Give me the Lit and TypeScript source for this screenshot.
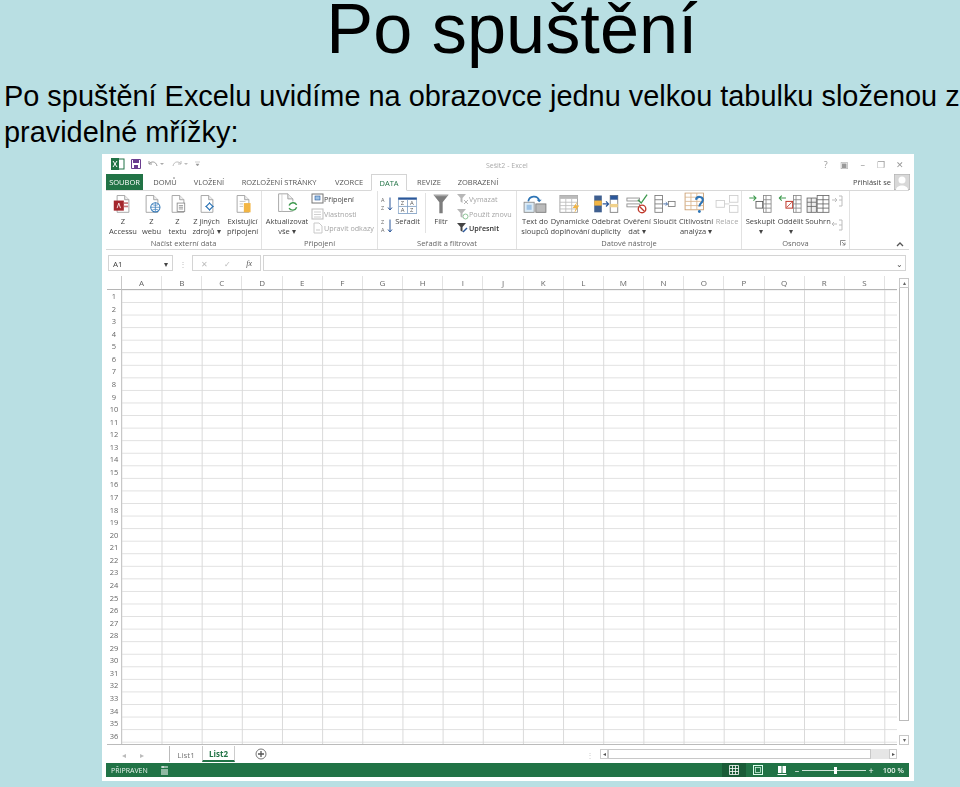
import { LitElement, html, css, svg } from "lit";
import { customElement } from "lit/decorators.js";

const doc = (extra: unknown) => html`<svg width="26" height="24" viewBox="0 0 26 24"><path d="M6 2h9l5 5v15H6z" fill="#fff" stroke="#9a9a9a"/><path d="M15 2v5h5" fill="#eee" stroke="#9a9a9a"/>${extra}</svg>`;
const azIcon = (a: string, b: string) => html`<svg width="13" height="14" viewBox="0 0 13 14"><path d="M10 .5v12M8 10.500l2 2.500 2-2.500" fill="none" stroke="#2b579a"/><text x="1" y="5" class="tiny">${a}</text><text x="1" y="13" class="tiny">${b}</text></svg>`;

const icons: Record<string, unknown> = {
  access: doc(svg`<rect x="2" y="8" width="12" height="12" fill="#a4262c"/><rect x="14" y="10" width="5" height="2" fill="#c9797d"/><rect x="14" y="14" width="5" height="2" fill="#c9797d"/><path d="M6 17l2-6 2 6" fill="none" stroke="#fff"/>`),
  web: doc(svg`<circle cx="17" cy="16" r="5.5" fill="#fff" stroke="#2e75b6" stroke-width="1.2"/><path d="M11.5 16h11M17 10.5v11M13 12.5c3 1.5 5 1.5 8 0M13 19.5c3-1.5 5-1.5 8 0" fill="none" stroke="#2e75b6" stroke-width=".8"/>`),
  text: doc(svg`<rect x="12" y="11" width="9" height="10" fill="#fff" stroke="#8a8a8a"/><path d="M14 14h5M14 16h5M14 18h5" stroke="#8a8a8a"/>`),
  other: doc(svg`<path d="M16 10v10M11 15h10" stroke="#2e75b6"/><path d="M16 11l4 4-4 4-4-4z" fill="#fff" stroke="#2e75b6" stroke-width="1.4"/>`),
  exist: doc(svg`<rect x="14" y="11" width="8" height="11" fill="#f2b544"/><path d="M9 9h7M9 12h4M9 15h4" stroke="#bbb"/>`),
  refresh: html`<svg width="32" height="26" viewBox="0 0 32 26"><path d="M6 2h11l6 6v15H6z" fill="#fff" stroke="#9a9a9a"/><path d="M17 2v6h6" fill="#eee" stroke="#9a9a9a"/><path d="M10 2v21" stroke="#ccc"/><circle cx="23" cy="17" r="6" fill="#fff"/><path d="M18.500 16a5 5 0 0 1 9-1M27.500 18a5 5 0 0 1-9 1" fill="none" stroke="#3f9a4f" stroke-width="1.700"/></svg>`,
  sortbox: html`<svg width="23" height="20" viewBox="0 0 23 20"><rect x=".5" y=".5" width="22" height="19" fill="#fff" stroke="#7f9fc4"/><rect x=".5" y=".5" width="22" height="2.500" fill="#2b579a"/><path d="M11.500 3v16M1 11h21" stroke="#7f9fc4"/><text x="3.500" y="9.500" class="cell">Z</text><text x="14.500" y="9.500" class="cell">A</text><text x="3.500" y="18" class="cell">A</text><text x="14.500" y="18" class="cell">Z</text></svg>`,
  funnel: html`<svg width="20" height="24" viewBox="0 0 20 24"><path d="M1 1h18l-7 9v13H8V10z" fill="#7d7d7d"/><path d="M1 1h18l-2 2H3z" fill="#a9a9a9"/></svg>`,
  ttc: html`<svg width="30" height="24" viewBox="0 0 30 24"><rect x="2" y="10" width="12" height="12" fill="#dcebf6" stroke="#888"/><rect x="5" y="13" width="6" height="6" fill="#9dc3e6"/><rect x="16" y="12" width="12" height="10" fill="#bbb" stroke="#777"/><path d="M7 9C8 2 18 1 20 8" fill="none" stroke="#2e75b6" stroke-width="2"/><path d="M17 7l3 3 3-3" fill="#2e75b6"/></svg>`,
  flash: html`<svg width="30" height="24" viewBox="0 0 30 24"><rect x="3" y="2" width="21" height="20" fill="#fff" stroke="#999"/><rect x="3" y="2" width="21" height="4" fill="#bbb"/><path d="M3 10h21M3 14h21M3 18h21M10 6v16M17 6v16" stroke="#bbb"/><path d="M24 9l-6 8h4l-2 6 6-9h-4z" fill="#f2b544"/></svg>`,
  dedupe: html`<svg width="32" height="24" viewBox="0 0 32 24"><rect x="2" y="2" width="9" height="20" fill="#3f5f8f"/><rect x="2" y="8" width="9" height="6" fill="#f2b544"/><rect x="21" y="2" width="9" height="20" fill="#fff" stroke="#777"/><rect x="21" y="2" width="9" height="5" fill="#2b579a"/><rect x="21" y="12" width="9" height="4" fill="#f2d28a"/><path d="M12 12h7M16 9l3 3-3 3" fill="none" stroke="#2b579a" stroke-width="1.500"/></svg>`,
  valid: html`<svg width="28" height="24" viewBox="0 0 28 24"><rect x="2" y="5" width="15" height="3.500" fill="#fff" stroke="#888"/><rect x="2" y="12" width="15" height="3.500" fill="#fff" stroke="#888"/><path d="M15 7l4 4 7-10" fill="none" stroke="#3f9a4f" stroke-width="1.600"/><circle cx="20" cy="18" r="4.500" fill="#fff" stroke="#c0392b" stroke-width="1.600"/><path d="M17 15l6 6" stroke="#c0392b" stroke-width="1.600"/></svg>`,
  merge: html`<svg width="28" height="24" viewBox="0 0 28 24"><rect x="2" y="2" width="9" height="20" fill="#fff" stroke="#777"/><path d="M2 7h9M2 12h9M2 17h9" stroke="#777"/><path d="M12 12h5M15 10l2 2-2 2" fill="none" stroke="#2b579a"/><rect x="18" y="9" width="8" height="6" fill="#fff" stroke="#777"/></svg>`,
  whatif: html`<svg width="30" height="26" viewBox="0 0 30 26"><rect x="2" y="1" width="22" height="20" fill="#fff" stroke="#c89a6a"/><path d="M2 6h22M2 11h22M2 16h22M9 1v20M16 1v20" stroke="#d9b58f"/><path d="M15 9c1-5 9-4 8 1-.5 3-4 3-4 7" fill="none" stroke="#2e75b6" stroke-width="2.600"/><circle cx="19" cy="23" r="1.700" fill="#2e75b6"/></svg>`,
  rel: html`<svg width="30" height="24" viewBox="0 0 30 24" opacity=".5"><rect x="2" y="8" width="10" height="8" fill="#fff" stroke="#999"/><rect x="18" y="2" width="10" height="8" fill="#fff" stroke="#999"/><rect x="18" y="14" width="10" height="8" fill="#fff" stroke="#999"/><path d="M12 12h6" stroke="#999"/></svg>`,
  group: html`<svg width="30" height="24" viewBox="0 0 30 24"><rect x="9" y="9" width="8" height="8" fill="#fff" stroke="#555"/><rect x="18" y="2" width="9" height="20" fill="#fff" stroke="#888"/><path d="M18 7h9M18 12h9M18 17h9M21 2v20" stroke="#888"/><path d="M1 5h8M6 2l3 3-3 3" fill="none" stroke="#3f9a4f" stroke-width="1.300"/></svg>`,
  ungroup: html`<svg width="30" height="24" viewBox="0 0 30 24"><rect x="9" y="9" width="8" height="8" fill="#fff" stroke="#c0392b" stroke-width="1.200"/><path d="M10 16l6-6" stroke="#c0392b"/><rect x="18" y="2" width="9" height="20" fill="#fff" stroke="#888"/><path d="M18 7h9M18 12h9M18 17h9M21 2v20" stroke="#888"/><path d="M9 5H1M4 2L1 5l3 3" fill="none" stroke="#3f9a4f" stroke-width="1.300"/></svg>`,
  subtotal: html`<svg width="30" height="24" viewBox="0 0 30 24"><rect x="2" y="5" width="11" height="17" fill="#eee" stroke="#666"/><rect x="14" y="2" width="14" height="20" fill="#fff" stroke="#666"/><path d="M2 10h11M2 15h11M7 5v17M14 7h14M14 12h14M14 17h14M21 2v20" stroke="#666"/></svg>`,
  smallOut: html`<svg width="12" height="44" viewBox="0 0 12 44" opacity=".55"><path d="M1 6h5M4 4l2 2-2 2M8 2h3v10H8M8 6h3" fill="none" stroke="#888"/><path d="M6 30H1M3 28l-2 2 2 2M8 26h3v10H8M8 31h3" fill="none" stroke="#888"/></svg>`,
  conn: html`<svg width="13" height="12" viewBox="0 0 13 12"><rect x="1" y="1" width="11" height="9" fill="#fff" stroke="#777"/><rect x="4" y="3" width="5" height="4" fill="#9dc3e6" stroke="#2b579a" stroke-width=".6"/></svg>`,
  props: html`<svg width="13" height="12" viewBox="0 0 13 12" opacity=".55"><rect x="1" y="1" width="11" height="10" fill="#fff" stroke="#888"/><path d="M3 4h7M3 6.500h7M3 9h7" stroke="#aaa"/></svg>`,
  links: html`<svg width="13" height="12" viewBox="0 0 13 12" opacity=".45"><path d="M3 1h5l3 3v7H3z" fill="#fff" stroke="#888"/><path d="M5 8h4" stroke="#888"/></svg>`,
  fClear: html`<svg width="13" height="12" viewBox="0 0 13 12" opacity=".6"><path d="M1 1h9L6.500 5v5L4.500 8.500V5z" fill="#888"/><path d="M8 7l4 4M12 7l-4 4" stroke="#888"/></svg>`,
  fAgain: html`<svg width="13" height="12" viewBox="0 0 13 12" opacity=".6"><path d="M1 1h9L6.500 5v5L4.500 8.500V5z" fill="#888"/><circle cx="9.500" cy="8.500" r="2.500" fill="none" stroke="#3f9a4f"/></svg>`,
  fAdv: html`<svg width="13" height="12" viewBox="0 0 13 12"><path d="M1 1h9L6.500 5v5L4.500 8.500V5z" fill="#444"/><path d="M7 10l4-4" stroke="#2b579a" stroke-width="1.400"/></svg>`,
};

interface Tool { w: number; icon: string; l1: string; l2?: string; dim?: boolean }
interface Small { icon: string; label: string; dim?: boolean; strong?: boolean }

const big = (t: Tool) => html`<div class="tool" style="width:${t.w}px"><div class="ic">${icons[t.icon]}</div><div class="lab ${t.dim ? "dim" : ""}">${t.l1}<br />${t.l2 ?? ""}</div></div>`;
const list = (w: number, rows: Small[]) => html`<div class="list" style="width:${w}px">${rows.map((r) => html`<div class="sm ${r.dim ? "dim" : ""} ${r.strong ? "strong" : ""}">${icons[r.icon]}<span>${r.label}</span></div>`)}</div>`;

const TABS: [string, number, boolean?][] = [
  ["DOMŮ", 44], ["VLOŽENÍ", 44], ["ROZLOŽENÍ STRÁNKY", 96], ["VZORCE", 44], ["DATA", 36, true], ["REVIZE", 44], ["ZOBRAZENÍ", 54],
];
const COLS = "ABCDEFGHIJKLMNOPQRS".split("");
const ROWS = Array.from({ length: 36 }, (_, i) => i + 1);

@customElement("app-root")
export class AppRoot extends LitElement {
  static styles = css`
    :host { display: block; width: 960px; height: 787px; overflow: hidden; background: #b9dfe3; font-family: "Liberation Sans", Arial, sans-serif; color: #000; }
    h1 { margin: 0; padding-left: 64px; height: 66px; font-size: 70.300px; line-height: 58px; font-weight: 400; text-align: center; white-space: nowrap; }
    .intro { margin: 12px 0 -11px; padding-left: 4px; height: 87px; width: 960px; box-sizing: border-box; font-size: 28.900px; line-height: 36px; }
    .wrap { padding-left: 102px; }
    .win { width: 812px; height: 627px; background: #fff; padding: 0 5px 4px 4px; box-sizing: border-box; display: flex; flex-direction: column; font-family: "Open Sans", sans-serif; font-size: 8px; color: #555; filter: blur(0.35px); }
    .title { height: 20px; display: flex; align-items: center; position: relative; flex: none; }
    .qat { display: flex; align-items: center; gap: 6px; padding-left: 5px; }
    .doc { position: absolute; left: 380px; top: 7px; color: #aaa; font-size: 7px; }
    .ctrl { margin-left: auto; display: flex; color: #999; font-size: 9px; }
    .ctrl span { width: 18.500px; text-align: center; }
    .tabs { height: 16px; display: flex; align-items: stretch; flex: none; font-size: 7.500px; }
    .file { width: 37px; background: #217346; color: #fff; display: flex; align-items: center; justify-content: center; }
    .tab { display: flex; align-items: center; justify-content: center; color: #555; flex: none; }
    .tab.on { color: #217346; border: 1px solid #d4d4d4; border-bottom: 1px solid #fff; background: #fff; box-sizing: border-box; margin-bottom: -1px; position: relative; z-index: 1; }
    .user { margin-left: auto; display: flex; align-items: center; gap: 3px; margin-right: -1px; color: #444; }
    .ribbon { height: 60px; flex: none; display: flex; border-top: 1px solid #d8d8d8; border-bottom: 1px solid #d8d8d8; box-sizing: border-box; position: relative; }
    .grp { display: flex; flex-direction: column; border-right: 1px solid #e2e2e2; flex: none; box-sizing: border-box; }
    .items { display: flex; height: 47px; }
    .cap { text-align: center; color: #666; font-size: 7.500px; line-height: 10px; position: relative; }
    .launch { position: absolute; right: 3px; top: 2px; }
    .tool { display: flex; flex-direction: column; align-items: center; flex: none; }
    .ic { height: 25px; display: flex; align-items: flex-end; justify-content: center; }
    .ic svg { transform: translateY(-2px) scale(.84); transform-origin: 50% 100%; flex: none; }
    .lab { text-align: center; line-height: 10px; color: #444; white-space: nowrap; font-size: 7.500px; }
    .dim { color: #aaa; }
    .list { display: flex; flex-direction: column; gap: 2.500px; padding-top: 2px; flex: none; }
    .sm { display: flex; align-items: center; height: 12px; color: #444; white-space: nowrap; font-size: 7.200px; }
    .sm.dim { color: #a5a5a5; }
    .sm.strong { color: #333; font-weight: 600; }
    .sortcol { display: flex; flex-direction: column; gap: 8px; padding-top: 6px; width: 16px; align-items: center; flex: none; }
    .vsep { width: 1px; height: 40px; margin: 2px 4px 0 4px; background: #e2e2e2; flex: none; }
    .collapse { position: absolute; right: 5px; bottom: 2px; width: 8px; height: 6px; }
    .tiny { font-size: 5.500px; fill: #666; font-family: "Open Sans", sans-serif; }
    .cell { font-size: 7px; fill: #555; font-family: "Open Sans", sans-serif; }
    .fbar { height: 26px; flex: none; display: flex; align-items: center; padding-left: 2px; box-sizing: border-box; }
    .box { height: 16px; border: 1px solid #d4d4d4; background: #fff; box-sizing: border-box; display: flex; align-items: center; flex: none; }
    .name { width: 65px; padding: 0 4px; justify-content: space-between; color: #444; }
    .dots { width: 19px; text-align: center; color: #bbb; flex: none; }
    .fx { width: 69px; justify-content: space-around; color: #bbb; margin-right: 2px; }
    .fx i { font-family: "Liberation Serif", serif; color: #555; }
    .input { width: 643px; justify-content: flex-end; padding-right: 2px; color: #555; }
    .sheet { flex: 1; display: flex; min-height: 0; }
    .gridbox { width: 790px; margin-left: 1px; display: grid; grid-template-columns: 15px 1fr; grid-template-rows: 14px 1fr; flex: none; min-height: 0; border-bottom: 1px solid #bbb; }
    .corner { border-right: 1px solid #c8c8c8; border-bottom: 1px solid #b5b5b5; box-sizing: border-box; }
    .colh { display: flex; border-bottom: 1px solid #b5b5b5; box-sizing: border-box; }
    .colh span { width: 40.170px; flex: none; text-align: center; line-height: 13px; color: #666; box-sizing: border-box; border-right: 1px solid #e2e2e2; }
    .rowh { border-right: 1px solid #c8c8c8; box-sizing: border-box; }
    .rowh span { display: block; height: 12.570px; line-height: 12.570px; text-align: center; color: #666; font-size: 7.500px; }
    .cells { background-image: linear-gradient(to right, #d9d9d9 1px, transparent 1px), linear-gradient(to bottom, #e0e0e0 1px, transparent 1px); background-size: 40.170px 100%, 100% 12.570px; background-position: 39.500px 0, 0 12px; }
    .vs { width: 10px; margin-left: 2px; box-sizing: border-box; margin-top: 2px; flex: none; display: flex; flex-direction: column; color: #666; font-size: 6px; }
    .vs b { height: 10px; line-height: 9px; text-align: center; font-weight: 400; border: 1px solid #c8c8c8; box-sizing: border-box; flex: none; }
    .vs u { flex: 1; display: block; }
    .vs u::before { content: ""; display: block; height: 433px; background: #fff; border: 1px solid #bbb; border-top: none; box-sizing: border-box; }
    .bottom { height: 18px; flex: none; display: flex; align-items: center; position: relative; }
    .nav { display: flex; gap: 14px; width: 63px; padding-left: 16px; box-sizing: border-box; color: #bbb; flex: none; }
    .st { display: flex; align-items: center; justify-content: center; height: 16px; color: #777; flex: none; font-size: 8px; }
    .st.l { width: 33px; border-left: 1px solid #bbb; box-sizing: border-box; }
    .st.on { width: 33px; color: #217346; font-weight: 700; border: 1px solid #ccc; border-top: none; border-bottom: 2px solid #217346; box-sizing: border-box; }
    .plus { margin-left: 20px; flex: none; }
    .split { margin-left: auto; margin-right: 6px; color: #ccc; flex: none; }
    .hs { margin-right: 12px; width: 297px; height: 10px; flex: none; display: flex; align-items: center; background: #e6e6e6; color: #555; font-size: 6px; }
    .hs b { width: 8px; height: 10px; line-height: 9px; text-align: center; background: #fff; border: 1px solid #ccc; font-weight: 400; box-sizing: border-box; flex: none; }
    .hs u { flex: 1; height: 10px; margin-right: 18px; background: #fff; border: 1px solid #c8c8c8; box-sizing: border-box; }
    .status { height: 14px; flex: none; background: #217346; color: #e8f2ec; display: flex; align-items: center; padding-left: 5px; font-size: 7px; gap: 12px; }
    .right { margin-left: auto; display: flex; align-items: center; height: 14px; padding-right: 5px; }
    .vw { width: 24px; height: 14px; display: flex; align-items: center; justify-content: center; flex: none; }
    .vw.on { background: #1a5c38; }
    .zoom { display: flex; align-items: center; color: #fff; font-size: 9px; margin: 0 9px 0 1px; width: 79px; justify-content: space-between; flex: none; }
    .track { flex: 1; height: 1px; background: #cfe3d8; margin: 0 3px; position: relative; }
    .thumb { position: absolute; left: 50%; top: -3px; width: 3px; height: 7px; background: #fff; }
    .pct { font-weight: 600; flex: none; font-size: 7.500px; }
  `;

  render() {
    return html`
      <h1>Po spuštění</h1>
      <p class="intro">Po spuštění Excelu uvidíme na obrazovce jednu velkou tabulku složenou z pravidelné mřížky:</p>
      <div class="wrap">
        <div class="win">
          <div class="title">
            <div class="qat">
              <svg width="14" height="12" viewBox="0 0 14 12"><rect x="4" y="1" width="9" height="10" fill="#fff" stroke="#217346"/><rect y="0" width="8" height="12" fill="#217346"/><path d="M2 3l4 6M6 3L2 9" stroke="#fff"/></svg>
              <svg width="10" height="10" viewBox="0 0 10 10"><path d="M.5.5h9v9h-9z" fill="#fff" stroke="#6a3d8f"/><rect x="2" y="1" width="6" height="3" fill="#6a3d8f"/><rect x="3" y="6" width="4" height="3.500" fill="#6a3d8f"/></svg>
              <svg width="18" height="10" viewBox="0 0 18 10"><path d="M2 2v3h3M2 5c2-3 7-3 8 2" fill="none" stroke="#999"/><path d="M13 4h4l-2 2z" fill="#aaa"/></svg>
              <svg width="18" height="10" viewBox="0 0 18 10"><path d="M10 2v3H7M10 5C8 2 3 2 2 7" fill="none" stroke="#bbb"/><path d="M13 4h4l-2 2z" fill="#bbb"/></svg>
              <svg width="5" height="8" viewBox="0 0 5 8"><path d="M0 2h5M1 4h3l-1.500 2z" fill="#999" stroke="#999" stroke-width=".5"/></svg>
            </div>
            <div class="doc">Sešit2 - Excel</div>
            <div class="ctrl"><span>?</span><span>▣</span><span>–</span><span>❐</span><span>✕</span></div>
          </div>
          <div class="tabs">
            <div class="file">SOUBOR</div>
            ${TABS.map(([t, w, on]) => html`<div class="tab ${on ? "on" : ""}" style="width:${w}px">${t}</div>`)}
            <div class="user">Přihlásit se
              <svg width="16" height="16" viewBox="0 0 16 16"><rect width="16" height="16" fill="#d8d8d8" stroke="#aaa"/><circle cx="8" cy="6" r="3.500" fill="#fff"/><path d="M2 16c0-6 12-6 12 0z" fill="#fff"/></svg>
            </div>
          </div>
          <div class="ribbon">
            <div class="grp" style="width:156px"><div class="items">
              <div style="width:2px"></div>
              ${big({ w: 30, icon: "access", l1: "Z", l2: "Accessu" })}${big({ w: 27, icon: "web", l1: "Z", l2: "webu" })}${big({ w: 25, icon: "text", l1: "Z", l2: "textu" })}${big({ w: 33, icon: "other", l1: "Z jiných", l2: "zdrojů ▾" })}<div style="width:2px"></div>${big({ w: 35, icon: "exist", l1: "Existující", l2: "připojení" })}
            </div><div class="cap">Načíst externí data</div></div>
            <div class="grp" style="width:116px"><div class="items">
              <div style="width:1px"></div>
              ${big({ w: 48, icon: "refresh", l1: "Aktualizovat", l2: "vše ▾" })}
              ${list(66, [{ icon: "conn", label: "Připojení" }, { icon: "props", label: "Vlastnosti", dim: true }, { icon: "links", label: "Upravit odkazy", dim: true }])}
            </div><div class="cap">Připojení</div></div>
            <div class="grp" style="width:139px"><div class="items">
              <div class="sortcol">${azIcon("A", "Z")}${azIcon("Z", "A")}</div>
              ${big({ w: 27, icon: "sortbox", l1: "Seřadit" })}
              <div class="vsep"></div>
              ${big({ w: 22, icon: "funnel", l1: "Filtr" })}<div style="width:5px"></div>
              ${list(60, [{ icon: "fClear", label: "Vymazat", dim: true }, { icon: "fAgain", label: "Použít znovu", dim: true }, { icon: "fAdv", label: "Upřesnit", strong: true }])}
            </div><div class="cap">Seřadit a filtrovat</div></div>
            <div class="grp" style="width:225px"><div class="items">
              <div style="width:2px"></div>
              ${big({ w: 32, icon: "ttc", l1: "Text do", l2: "sloupců" })}${big({ w: 38, icon: "flash", l1: "Dynamické", l2: "doplňování" })}${big({ w: 34, icon: "dedupe", l1: "Odebrat", l2: "duplicity" })}${big({ w: 28, icon: "valid", l1: "Ověření", l2: "dat ▾" })}${big({ w: 28, icon: "merge", l1: "Sloučit" })}${big({ w: 34, icon: "whatif", l1: "Citlivostní", l2: "analýza ▾" })}${big({ w: 28, icon: "rel", l1: "Relace", dim: true })}
            </div><div class="cap">Datové nástroje</div></div>
            <div class="grp" style="width:108px"><div class="items">
              <div style="width:3px"></div>
              ${big({ w: 31, icon: "group", l1: "Seskupit", l2: "▾" })}${big({ w: 29, icon: "ungroup", l1: "Oddělit", l2: "▾" })}${big({ w: 26, icon: "subtotal", l1: "Souhrn" })}
              <div style="padding-top:3px">${icons.smallOut}</div>
            </div><div class="cap">Osnova<svg class="launch" width="6" height="6" viewBox="0 0 6 6"><path d="M.5 5.500v-5h5M2 2l3 3M5 2.500V5H2.500" fill="none" stroke="#777" stroke-width=".8"/></svg></div></div>
            <svg class="collapse" viewBox="0 0 8 6"><path d="M1 5l3-3 3 3" fill="none" stroke="#555" stroke-width="1.300"/></svg>
          </div>
          <div class="fbar">
            <div class="box name"><span>A1</span><span>▾</span></div>
            <div class="dots">⋮</div>
            <div class="box fx"><span>✕</span><span>✓</span><i>fx</i></div>
            <div class="box input"><span>⌄</span></div>
          </div>
          <div class="sheet">
            <div class="gridbox">
              <div class="corner"></div>
              <div class="colh">${COLS.map((c) => html`<span>${c}</span>`)}</div>
              <div class="rowh">${ROWS.map((r) => html`<span>${r}</span>`)}</div>
              <div class="cells"></div>
            </div>
            <div class="vs"><b>▴</b><u></u><b>▾</b></div>
          </div>
          <div class="bottom">
            <div class="nav"><span>◂</span><span>▸</span></div>
            <div class="st l">List1</div>
            <div class="st on">List2</div>
            <svg class="plus" width="12" height="12" viewBox="0 0 12 12"><circle cx="6" cy="6" r="5" fill="#fff" stroke="#777"/><path d="M3 6h6M6 3v6" stroke="#555" stroke-width="1.300"/></svg>
            <span class="split">⋮</span>
            <div class="hs"><b>◂</b><u></u><b>▸</b></div>
          </div>
          <div class="status">
            <span>PŘIPRAVEN</span>
            <svg width="9" height="10" viewBox="0 0 9 10"><path d="M1 2h7M3 1v2M1 5h7M1 7h7M1 9h7" stroke="#fff"/></svg>
            <div class="right">
              <div class="vw on"><svg width="10" height="10" viewBox="0 0 10 10"><path d="M.5.5h9v9h-9zM.5 3.500h9M.5 6.500h9M3.500.5v9M6.500.5v9" fill="none" stroke="#fff" stroke-width=".8"/></svg></div>
              <div class="vw"><svg width="10" height="10" viewBox="0 0 10 10"><rect x=".5" y=".5" width="9" height="9" fill="none" stroke="#dfe" /><rect x="2.500" y="2.500" width="5" height="5" fill="none" stroke="#dfe" stroke-width=".7"/></svg></div>
              <div class="vw"><svg width="10" height="10" viewBox="0 0 10 10"><rect x="1" y="1" width="3.500" height="7" fill="#fff"/><rect x="5.500" y="1" width="3.500" height="7" fill="#fff"/><path d="M.5 9.500h9" stroke="#fff"/></svg></div>
              <div class="zoom"><span>–</span><div class="track"><div class="thumb"></div></div><span>+</span></div>
              <span class="pct">100 %</span>
            </div>
          </div>
        </div>
      </div>
    `;
  }
}
